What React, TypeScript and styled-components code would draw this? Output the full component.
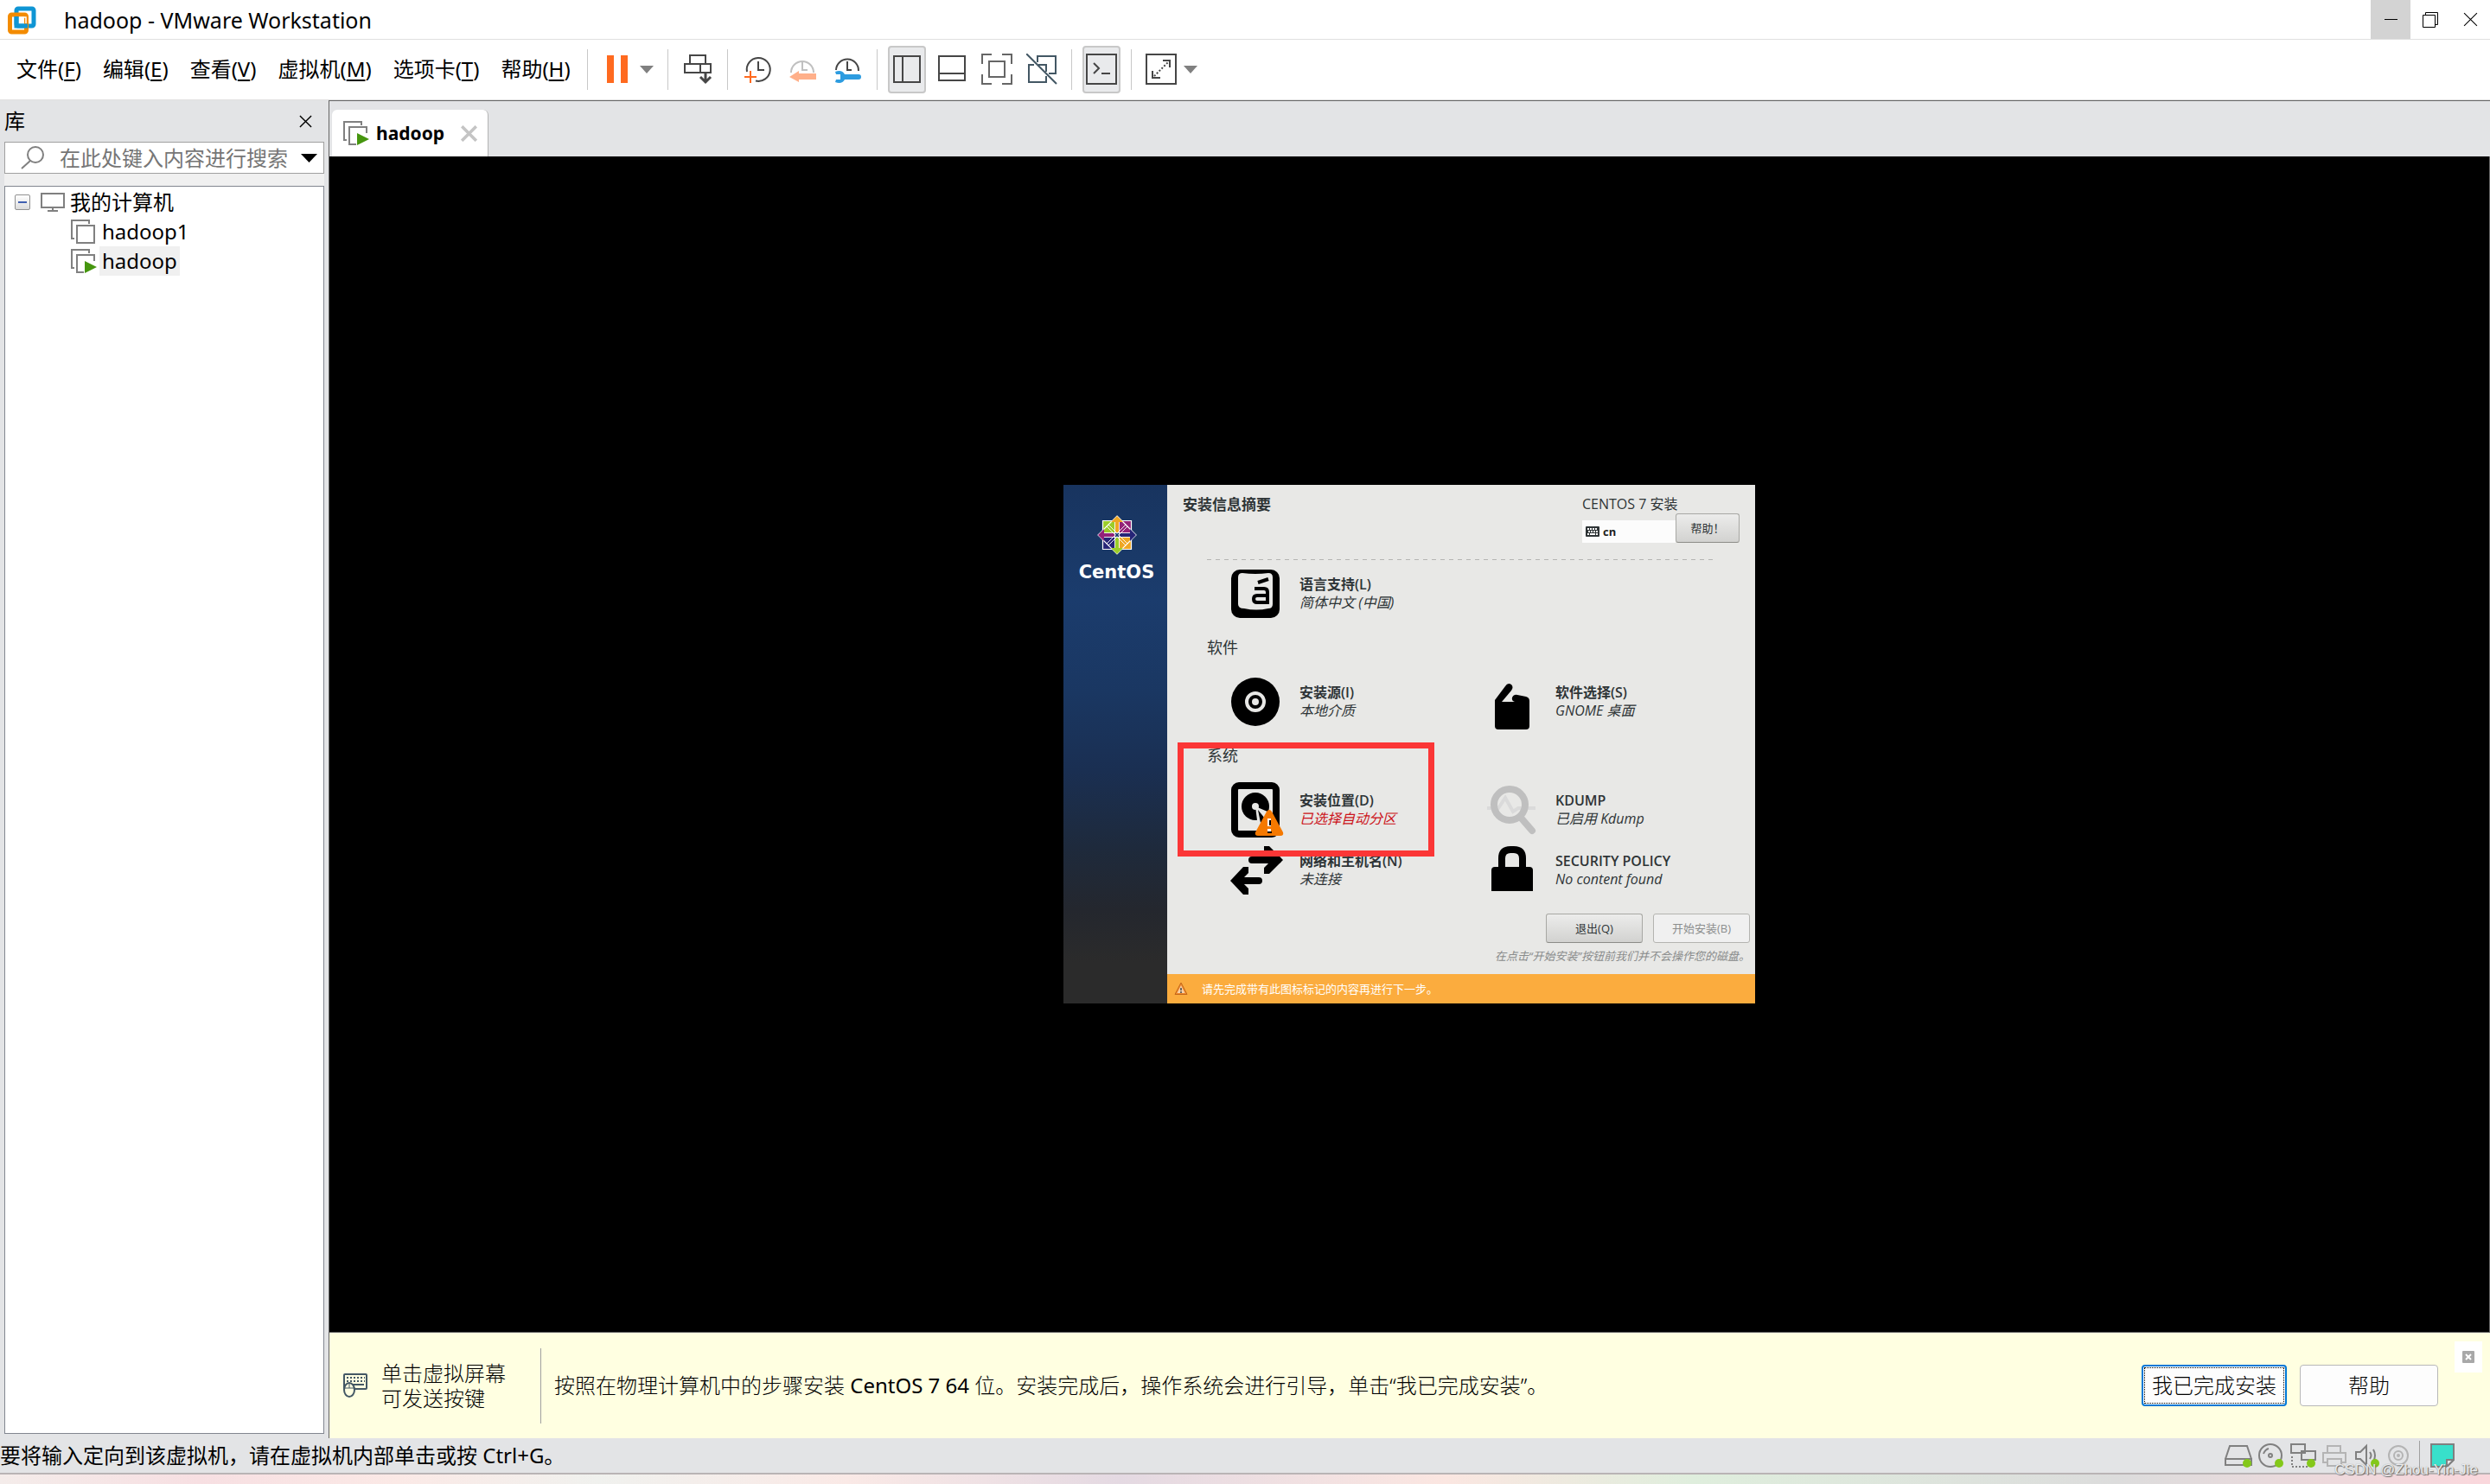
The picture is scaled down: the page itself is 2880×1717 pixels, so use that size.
import React from "react";
import styled, { createGlobalStyle } from "styled-components";

const uiFont = `"Noto Sans", "Noto Sans CJK SC", sans-serif`;
const guestFont = `"Open Sans", "Noto Sans CJK SC", sans-serif`;

const GlobalStyle = createGlobalStyle`
  *, *::before, *::after { box-sizing: border-box; }
  body { margin: 0; background: #e3e4e6; color: #000; font: 24px/32px ${uiFont}; }
  button, input { font: inherit; color: inherit; margin: 0; padding: 0; border: 0; background: none; }
  ul, h1, h2, p { margin: 0; padding: 0; font: inherit; list-style: none; }
  svg { display: block; flex: none; }
`;

const Window = styled.div`
  min-height: 100vh;
  display: flex;
  flex-direction: column;
  position: relative;
`;

/* ---------- title bar ---------- */
const TitleBar = styled.header`
  height: 46px;
  display: flex;
  align-items: center;
  background: #fff;
  border-bottom: 1px solid #e0e0e0;
  padding-left: 8px;
`;
const Title = styled.h1`
  flex: 1;
  padding-left: 32px;
  font-size: 25px;
`;
const CaptionButton = styled.button<{ $hot?: boolean }>`
  width: 46px;
  height: 45px;
  display: flex;
  align-items: center;
  justify-content: center;
  background: ${(p) => (p.$hot ? "#d3d3d3" : "transparent")};
`;

/* ---------- menu and tool bar ---------- */
const CommandBar = styled.div`
  height: 70px;
  display: flex;
  align-items: center;
  background: #fff;
  border-bottom: 1px solid #e0e0e0;
  padding: 0 0 1px 19px;
`;
const Menu = styled.nav`
  display: flex;
  gap: 25px;
  margin-right: 7px;
`;
const MenuItem = styled.button`
  white-space: nowrap;
  u { text-underline-offset: 3px; }
`;
const Separator = styled.span`
  width: 1px;
  height: 47px;
  background: #c8c8c8;
  margin: 0 12px;
`;
const ToolGroup = styled.div`
  display: flex;
  gap: 8px;
`;
const Tool = styled.button<{ $on?: boolean }>`
  width: 44px;
  height: 55px;
  display: flex;
  align-items: center;
  justify-content: center;
  border-radius: 4px;
  border: 2px solid ${(p) => (p.$on ? "#c8c8c8" : "transparent")};
  background: ${(p) => (p.$on ? "#e9eaec" : "transparent")};
`;
const DropArrow = styled.button`
  width: 24px;
  height: 55px;
  display: flex;
  align-items: center;
  justify-content: center;
`;

/* ---------- body ---------- */
const Body = styled.div`
  flex: 1;
  display: flex;
`;
const Library = styled.aside`
  width: 380px;
  flex: none;
  display: flex;
  flex-direction: column;
  padding: 0 5px 5px;
`;
const LibraryHead = styled.div`
  height: 48px;
  display: flex;
  align-items: center;
  justify-content: space-between;
  padding-right: 14px;
`;
const SearchBox = styled.div`
  height: 37px;
  display: flex;
  align-items: center;
  background: #fff;
  border: 1px solid #a0a0a0;
  padding: 0 7px 0 18px;
`;
const SearchInput = styled.input`
  flex: 1;
  min-width: 0;
  padding-left: 18px;
  outline: 0;
  &::placeholder { color: #767676; opacity: 1; }
`;
const Gutter = styled.div`
  height: 14px;
  background: #f0f0f0;
`;
const Tree = styled.ul`
  flex: 1;
  background: #fff;
  border: 1px solid #828790;
  padding-top: 1px !important;
`;
const TreeRow = styled.li<{ $depth: number }>`
  height: 34px;
  display: flex;
  align-items: center;
  padding-left: ${(p) => (p.$depth ? 76 : 11)}px;
`;
const Expander = styled.button`
  width: 18px;
  height: 18px;
  display: flex;
  align-items: center;
  justify-content: center;
  margin-right: 12px;
  border: 1px solid #919191;
  border-radius: 2px;
  background: linear-gradient(#fff, #dcdcdc);
`;
const NodeLabel = styled.span<{ $selected?: boolean }>`
  padding: 0 3px;
  margin-left: 3px;
  line-height: 34px;
  background: ${(p) => (p.$selected ? "#f0f0f0" : "transparent")};
`;

const Workspace = styled.main`
  flex: 1;
  min-width: 0;
  display: flex;
  flex-direction: column;
  border: solid #666;
  border-width: 1px 0 0 1px;
`;
const TabStrip = styled.div`
  height: 64px;
  display: flex;
  align-items: flex-end;
  padding-left: 3px;
`;
const Tab = styled.div`
  height: 54px;
  display: flex;
  align-items: center;
  background: #fff;
  border-right: 1px solid #b4b4b4;
  border-radius: 6px 6px 0 0;
  padding: 0 12px 0 13px;
  font-weight: 700;
  font-size: 21px;
`;
const TabName = styled.span`
  margin: 0 19px 0 8px;
`;
const TabClose = styled.button`
  display: flex;
`;
const Console = styled.div`
  flex: 1;
  display: flex;
  align-items: center;
  justify-content: center;
  background: #000;
  border: solid #666;
  border-width: 0 1px 1px 0;
`;

/* ---------- guest screen ---------- */
const Guest = styled.section`
  width: 800px;
  height: 600px;
  display: flex;
  position: relative;
  font: 16px/21px ${guestFont};
  color: #2e3436;
`;
const Brand = styled.div`
  width: 120px;
  display: flex;
  flex-direction: column;
  align-items: center;
  gap: 8px;
  padding: 35px 0 0 3px;
  background: linear-gradient(#18345f, #1b3c6d 22%, #1a3762 40%, #1a2f52 55%, #1e2a3c 70%, #24272e 82%, #2b2b2b 92%);
`;
const BrandName = styled.span`
  color: #fff;
  font: 700 21px/24px "DejaVu Sans", sans-serif;
`;
const Hub = styled.div`
  flex: 1;
  display: flex;
  flex-direction: column;
  background: #e8e8e6;
`;
const HubHead = styled.div`
  height: 85px;
  display: flex;
  justify-content: space-between;
  padding: 12px 18px 0;
`;
const HubTitle = styled.h2`
  font-weight: 700;
  font-size: 17px;
`;
const HubTools = styled.div`
  width: 182px;
`;
const HubToolRow = styled.div`
  display: flex;
  align-items: flex-end;
`;
const Layout = styled.div`
  flex: 1;
  height: 26px;
  display: flex;
  align-items: center;
  gap: 4px;
  padding-left: 4px;
  background: #fcfcfc;
  color: #1c1f20;
  font-weight: 700;
  font-size: 13px;
`;
const GuestButton = styled.button<{ $wide?: boolean }>`
  width: ${(p) => (p.$wide ? 112 : 74)}px;
  height: 34px;
  border: 1px solid #a8a8a4;
  border-bottom-color: #8c8c88;
  border-radius: 3px;
  background: linear-gradient(#ececeb, #d2d2d0);
  font-size: 13px;
  line-height: 20px;
  &:disabled {
    background: #f0f0f0;
    border-color: #b4b4b0;
    color: #8c8e8e;
  }
`;
const Dashes = styled.div`
  height: 1px;
  margin: 1px 49px 4px 46px;
  background: repeating-linear-gradient(90deg, #b4b4b2 0 5px, transparent 5px 10px);
`;
const Category = styled.h2`
  height: 55px;
  display: flex;
  align-items: center;
  padding-left: 46px !important;
  font-size: 18px !important;
`;
const SpokeGrid = styled.div`
  display: grid;
  grid-template-columns: 296px 1fr;
  padding-left: 74px;
`;
const Spoke = styled.button`
  height: 70px;
  display: flex;
  align-items: center;
  gap: 23px;
  text-align: left;
  white-space: nowrap;
`;
const SpokeIcon = styled.span`
  width: 56px;
  svg { overflow: visible; }
`;
const SpokeName = styled.strong`
  display: block;
  font-size: 16px;
  font-weight: 600;
`;
const SpokeStatus = styled.em<{ $alert?: boolean }>`
  display: block;
  font-size: 16px;
  color: ${(p) => (p.$alert ? "#cc1420" : "inherit")};
`;
const HubFoot = styled.div`
  flex: 1;
  display: flex;
  flex-direction: column;
  align-items: flex-end;
  padding: 15px 6px 0;
`;
const FootButtons = styled.div`
  display: flex;
  gap: 12px;
`;
const FootNote = styled.em`
  padding-top: 5px;
  font-size: 13px;
  color: #8a8c8c;
`;
const Warning = styled.p`
  height: 34px;
  display: flex;
  align-items: center;
  gap: 16px;
  padding-left: 8px !important;
  background: #fbac3e;
  color: #fff;
  font-size: 13px !important;
`;
const Highlight = styled.div`
  position: absolute;
  left: 132px;
  top: 298px;
  width: 297px;
  height: 132px;
  border: 7px solid #fb3636;
  pointer-events: none;
`;

/* ---------- hint panel ---------- */
const Hint = styled.section`
  height: 122px;
  display: flex;
  align-items: center;
  background: #ffffe1;
  padding: 0 9px 0 16px;
  font-weight: 300;
`;
const HintKeys = styled.p`
  width: 184px;
  margin-left: 16px !important;
  line-height: 29px !important;
`;
const HintRule = styled.span`
  width: 1px;
  height: 87px;
  background: #a0a0a0;
`;
const HintText = styled.p`
  flex: 1;
  padding-left: 15px !important;
  span { font-weight: 400; }
`;
const HintButton = styled.button<{ $primary?: boolean }>`
  width: ${(p) => (p.$primary ? 168 : 160)}px;
  height: 48px;
  margin-right: ${(p) => (p.$primary ? 15 : 19)}px;
  border: ${(p) => (p.$primary ? "2px solid #0078d7" : "1px solid #b8b8b8")};
  border-radius: 4px;
  background: #fdfdfd;
  outline: ${(p) => (p.$primary ? "1px dotted #000" : "none")};
  outline-offset: -4px;
  white-space: nowrap;
`;
const HintClose = styled.button`
  width: 32px;
  height: 36px;
  align-self: flex-start;
  margin-top: 10px;
  display: flex;
  align-items: center;
  justify-content: center;
  background: #fff;
`;

/* ---------- status bar ---------- */
const StatusBar = styled.footer`
  height: 42px;
  display: flex;
  align-items: center;
  justify-content: space-between;
  border-bottom: 2px solid #b9b4b5;
  padding-right: 41px;
`;
const Devices = styled.div`
  display: flex;
  align-items: center;
  gap: 5px;
`;
const DeviceRule = styled.span`
  width: 1px;
  height: 34px;
  margin: 0 7px 0 3px;
  background: #a0a0a0;
`;
const Desktop = styled.div`
  height: 11px;
  background: linear-gradient(90deg, #f4ecea, #f7dfe2 8%, #fbe9e6 16%, #f0f1ee 24%, #fae9e6 34%, #e4d9e2 45%, #fbe6e1 58%, #dfeedd 68%, #dcdcdc 85%, #fad7dc);
`;
const Watermark = styled.span`
  position: absolute;
  right: 14px;
  bottom: 4px;
  font: 17px/24px "Liberation Sans", sans-serif;
  color: rgba(255, 255, 255, 0.85);
  text-shadow: 1px 1px 1px #666, 0 0 1px #888;
`;

/* ---------- drawings ---------- */
const AppLogo = () => (
  <svg width="34" height="34" viewBox="0 0 34 34" fill="none">
    <rect x="11" y="4" width="20" height="20" rx="2" stroke="#0f95d4" strokeWidth="5" />
    <rect x="3.500" y="11" width="19" height="20" rx="2" stroke="#f38b00" strokeWidth="5" />
    <path d="M11 13v11h13" stroke="#0f95d4" strokeWidth="5" />
    <path d="M14 14h8v7" stroke="#fff" strokeWidth="1.500" />
  </svg>
);

const Arrow = ({ color = "#808080", w = 16, h = 9 }: { color?: string; w?: number; h?: number }) => (
  <svg width={w} height={h} viewBox="0 0 16 9" preserveAspectRatio="none"><path d="M0 0h16L8 9z" fill={color} /></svg>
);

const VmIcon = ({ running }: { running?: boolean }) => (
  <svg width="30" height="28" viewBox="0 0 30 28" fill="none" stroke="#808080" strokeWidth="2">
    <path d="M4 22H1V1h20v4" />
    <path d={running ? "M15 27H7V7h20v7" : "M7 7h20v20H7z"} />
    {running && <path d="M16 14l14 7-14 7z" fill="#46960f" stroke="none" />}
  </svg>
);

const Cross = ({ size, color, width }: { size: number; color: string; width: number }) => (
  <svg width={size} height={size} viewBox="0 0 16 16" stroke={color} strokeWidth={width}><path d="M1 1l14 14M15 1L1 15" /></svg>
);

const Glyph = ({ children, color = "#464646", size = 36 }: { children: React.ReactNode; color?: string; size?: number }) => (
  <svg width={size} height={size} viewBox={`0 0 ${size} ${size}`} fill="none" stroke={color} strokeWidth="2">{children}</svg>
);

const CtrlAltDel = () => (
  <Glyph><path d="M9 12V2h18v10M3 12h30v10H3zM21 12v10" /><path d="M27 23v10M21 27l6 6 6-6" strokeWidth="3" /></Glyph>
);
const ClockAdd = () => (
  <Glyph>
    <path d="M6 21A13.500 13.500 0 1 1 16 31.500" /><path d="M19 9v10h7" />
    <path d="M10 20v14M3 27h14" stroke="#ff6a1f" />
  </Glyph>
);
const ClockBack = () => (
  <Glyph color="#c0c0c0">
    <path d="M5 22A13 13 0 1 1 31 22" /><path d="M18 9v10h6" />
    <path d="M3 27l11-7v3h20v7H14v3z" fill="#ffb08a" stroke="none" />
  </Glyph>
);
const ClockManage = () => (
  <Glyph>
    <path d="M5 19A13 13 0 1 1 31 20" /><path d="M18 9v10h5" />
    <path d="M4 21c5-2 9-1 11 3h16a3 3 0 0 1 0 6H15c-2 4-6 5-11 3l1-3h5V24H5z" fill="#2d9ce0" stroke="none" />
  </Glyph>
);
const SidePane = () => <Glyph><path d="M3 3h30v30H3zM13 3v30" /></Glyph>;
const BottomPane = () => <Glyph><path d="M3 3h30v28H3zM3 23h30" /></Glyph>;
const FitScreen = () => (
  <Glyph color="#666"><path d="M1 12V1h11M24 1h11v11M35 24v11H24M12 35H1V24M9 9h18v18H9z" /></Glyph>
);
const NoUnity = () => (
  <Glyph color="#435764"><path d="M13 10V3h21v20h-8M9 13H3v20h20v-7M14 13h9v8M0 0l35 35" /></Glyph>
);
const Terminal = () => <Glyph><path d="M1 1h34v34H1zM9 11l6 6-6 6M18 23h10" /></Glyph>;
const Stretch = () => (
  <Glyph><path d="M1 1h34v34H1zM20 8h8v8M8 20v8h9" /><path d="M10 26L26 10" strokeDasharray="2 2" /></Glyph>
);

const CentosLogo = () => (
  <svg width="46" height="46" viewBox="0 0 46 46" stroke="#fff" strokeWidth="1.200">
    <path d="M6.500 6.500H22v16H6.500z" fill="#9ccd2a" />
    <path d="M24 6.500h15.500v16H24z" fill="#932279" />
    <path d="M24 24h15.500v15.500H24z" fill="#efa724" />
    <path d="M6.500 24H22v15.500H6.500z" fill="#262577" />
    <path d="M23 1l22 22-22 22L1 23z" fill="none" />
    <path d="M1 23l7-7v5h12v4H8v5z" fill="#932279" stroke="none" />
    <path d="M45 23l-7-7v5H26v4h12v5z" fill="#262577" stroke="none" />
    <path d="M23 1l-7 7h5v12h4V8h5z" fill="#efa724" stroke="none" />
    <path d="M23 45l-7-7h5V26h4v12h5z" fill="#9ccd2a" stroke="none" />
    <path d="M20.500 8v30M25.500 8v30M8 20.500h30M8 25.500h30M11 13l9 9M13 11l9 9M35 13l-9 9M33 11l-9 9M11 33l9-9M13 35l9-9M35 33l-9-9M33 35l-9-9" fill="none" strokeWidth=".9" />
    <path d="M21 21l4 4M25 21l-4 4" stroke="#1b3c6d" strokeWidth="1.600" />
  </svg>
);

const LanguageIcon = () => (
  <svg width="56" height="56" viewBox="0 0 56 56">
    <rect width="56" height="56" rx="10" />
    <path d="M13 4q15 2 30 0 5 0 5 5v31q0 5-5 5-14 3-28 0-7 0-7-5V9q0-5 5-5z" fill="#e8e8e6" />
    <path d="M31 15l12-4M27 22h11q4 0 4 4v12H30q-4 0-4-4t4-4h12" fill="none" stroke="#000" strokeWidth="4" />
  </svg>
);
const DiscIcon = () => (
  <svg width="56" height="56" viewBox="0 0 56 56">
    <circle cx="28" cy="28" r="28" /><circle cx="28" cy="28" r="10" fill="none" stroke="#e8e8e6" strokeWidth="4" /><circle cx="28" cy="28" r="4" fill="#e8e8e6" />
  </svg>
);
const PackageIcon = () => (
  <svg width="56" height="56" viewBox="0 -4 56 56">
    <path d="M9 22L21 6q3-5 7-2 3 3 0 7L17 24h15q-4-1-3-5 2-4 6-3l10 2q4 1 4 5v29q0 4-4 4H13q-4 0-4-4z" />
  </svg>
);
const DriveIcon = () => (
  <svg width="60" height="64" viewBox="0 0 60 64">
    <rect x="4" y="4" width="48" height="56" rx="5" fill="none" stroke="#000" strokeWidth="8" />
    <circle cx="28" cy="28" r="16" /><circle cx="28" cy="28" r="4" fill="#e8e8e6" />
    <path d="M28 28l14 6v10H30z" fill="#e8e8e6" /><path d="M31 32l8 10-5 5z" />
    <path d="M41 34q3-4 6 0l13 24q1 4-3 4H31q-4 0-3-4z" fill="#f57900" />
    <path d="M44 42v9M44 54v4" stroke="#fff" strokeWidth="4" />
    <path d="M45 44v6M42 58h5" stroke="#000" strokeWidth="2" />
  </svg>
);
const NetworkIcon = () => (
  <svg width="60" height="56" viewBox="0 0 60 56" fill="none" stroke="#000" strokeWidth="8">
    <path d="M24 16h30M32 40H6" strokeLinecap="round" />
    <path d="M38 0h6l16 16-16 16h-6v-7l9-9-9-9zM20 24h-6L-1 40l15 16h6v-7l-9-9 9-9z" fill="#000" stroke="none" />
  </svg>
);
const KdumpIcon = () => (
  <svg width="56" height="56" viewBox="0 0 56 56" fill="none">
    <path d="M0 26h13l8-12 9 16 6-4h20" stroke="#dadada" strokeWidth="4" />
    <circle cx="26" cy="22" r="18" stroke="#bfbfbf" strokeWidth="8" />
    <path d="M39 37l13 15" stroke="#bfbfbf" strokeWidth="8" strokeLinecap="round" />
  </svg>
);
const LockIcon = () => (
  <svg width="56" height="56" viewBox="0 0 56 56">
    <path d="M17 26V14q0-10 10-10h4q10 0 10 10v12" fill="none" stroke="#000" strokeWidth="8" />
    <path d="M5 28q0-4 4-4h40q4 0 4 4v24H5z" />
  </svg>
);
const KeyboardGlyph = () => (
  <svg width="16" height="12" viewBox="0 0 16 12">
    <rect width="16" height="12" rx="1" fill="#2e3436" />
    <path d="M2 3h12M3 6h11" stroke="#fff" strokeWidth="2" strokeDasharray="2 1" /><path d="M2 9h2M5 9h6M12 9h2" stroke="#fff" strokeWidth="2" />
  </svg>
);
const SmallWarning = () => (
  <svg width="16" height="16" viewBox="0 0 16 16">
    <path d="M8 1l7 13.500H1z" fill="#f08a2c" stroke="#c4661a" strokeLinejoin="round" />
    <path d="M8 4l4.500 9h-9z" fill="#f6d0a8" /><path d="M8 7v3M8 11v2" stroke="#444" strokeWidth="1.500" />
  </svg>
);
const KeysIcon = () => (
  <svg width="28" height="28" viewBox="0 0 28 28" fill="none" stroke="#435764" strokeWidth="2">
    <rect x="1" y="1" width="26" height="17" rx="1" />
    <path d="M4 5h21M4 9h21" strokeDasharray="2 2" /><path d="M10 13h14" />
    <ellipse cx="7" cy="19" rx="6" ry="8" fill="#ffffe1" /><path d="M1 17h12M7 11v6" strokeWidth="1" />
  </svg>
);

const Device = ({ children, faded, live }: { children: React.ReactNode; faded?: boolean; live?: boolean }) => (
  <svg width="32" height="30" viewBox="0 0 32 30" fill="none" stroke={faded ? "#b4b4b4" : "#808080"} strokeWidth="2">
    {children}
    {live && <circle cx="26" cy="24" r="5" fill="#84c81a" stroke="none" />}
  </svg>
);

const menus = [["文件", "F"], ["编辑", "E"], ["查看", "V"], ["虚拟机", "M"], ["选项卡", "T"], ["帮助", "H"]];

type SpokeItem = { name: string; status: string; icon: React.ReactNode; alert?: boolean };
const SpokeButton = ({ name, status, icon, alert }: SpokeItem) => (
  <Spoke>
    <SpokeIcon>{icon}</SpokeIcon>
    <span>
      <SpokeName>{name}</SpokeName>
      <SpokeStatus $alert={alert}>{status}</SpokeStatus>
    </span>
  </Spoke>
);

export default function App() {
  return (
    <Window lang="zh-CN">
      <GlobalStyle />
      <TitleBar>
        <AppLogo />
        <Title>hadoop - VMware Workstation</Title>
        <CaptionButton $hot aria-label="最小化">
          <svg width="15" height="15"><path d="M0 7.500h15" stroke="#000" /></svg>
        </CaptionButton>
        <CaptionButton aria-label="还原">
          <svg width="18" height="18" fill="none" stroke="#000"><path d="M.5 3.500h14v14H.5zM3.500 3V.5h14v14H15" /></svg>
        </CaptionButton>
        <CaptionButton aria-label="关闭"><Cross size={17} color="#000" width={1} /></CaptionButton>
      </TitleBar>

      <CommandBar>
        <Menu>
          {menus.map(([label, key]) => (
            <MenuItem key={key}>{label}(<u>{key}</u>)</MenuItem>
          ))}
        </Menu>
        <Separator />
        <Tool aria-label="挂起"><svg width="24" height="32"><path d="M0 0h8v32H0zM16 0h8v32h-8z" fill="#ff6a1f" /></svg></Tool>
        <DropArrow aria-label="电源选项"><Arrow /></DropArrow>
        <Separator />
        <Tool aria-label="发送 Ctrl+Alt+Del"><CtrlAltDel /></Tool>
        <Separator />
        <ToolGroup>
          <Tool aria-label="拍摄快照"><ClockAdd /></Tool>
          <Tool aria-label="恢复快照"><ClockBack /></Tool>
          <Tool aria-label="管理快照"><ClockManage /></Tool>
        </ToolGroup>
        <Separator />
        <ToolGroup>
          <Tool $on aria-label="显示库"><SidePane /></Tool>
          <Tool aria-label="显示缩略图栏"><BottomPane /></Tool>
          <Tool aria-label="全屏"><FitScreen /></Tool>
          <Tool aria-label="Unity"><NoUnity /></Tool>
        </ToolGroup>
        <Separator />
        <Tool $on aria-label="控制台视图"><Terminal /></Tool>
        <Separator />
        <Tool aria-label="拉伸"><Stretch /></Tool>
        <DropArrow aria-label="拉伸选项"><Arrow /></DropArrow>
      </CommandBar>

      <Body>
        <Library>
          <LibraryHead>
            <span>库</span>
            <button aria-label="关闭库"><Cross size={15} color="#000" width={1.5} /></button>
          </LibraryHead>
          <SearchBox>
            <svg width="27" height="27" viewBox="0 0 27 27" fill="none" stroke="#808080" strokeWidth="2"><circle cx="17" cy="10" r="9" /><path d="M11 17l-10 9" /></svg>
            <SearchInput aria-label="搜索" placeholder="在此处键入内容进行搜索" />
            <button aria-label="搜索选项"><Arrow color="#000" w={19} h={10} /></button>
          </SearchBox>
          <Gutter />
          <Tree>
            <TreeRow $depth={0}>
              <Expander aria-label="折叠"><svg width="10" height="2"><path d="M0 1h10" stroke="#4060b0" strokeWidth="2" /></svg></Expander>
              <svg width="28" height="22" fill="none" stroke="#808080" strokeWidth="2"><path d="M1 1h26v16H1zM14 17v4M8 21h12" /></svg>
              <NodeLabel>我的计算机</NodeLabel>
            </TreeRow>
            <TreeRow $depth={1}><VmIcon /><NodeLabel>hadoop1</NodeLabel></TreeRow>
            <TreeRow $depth={1}><VmIcon running /><NodeLabel $selected>hadoop</NodeLabel></TreeRow>
          </Tree>
        </Library>

        <Workspace>
          <TabStrip>
            <Tab>
              <VmIcon running />
              <TabName>hadoop</TabName>
              <TabClose aria-label="关闭选项卡"><Cross size={19} color="#c4c4c4" width={3} /></TabClose>
            </Tab>
          </TabStrip>

          <Console>
            <Guest>
              <Brand>
                <CentosLogo />
                <BrandName>CentOS</BrandName>
              </Brand>
              <Hub>
                <HubHead>
                  <HubTitle>安装信息摘要</HubTitle>
                  <HubTools>
                    <span>CENTOS 7 安装</span>
                    <HubToolRow>
                      <Layout><KeyboardGlyph />cn</Layout>
                      <GuestButton>帮助！</GuestButton>
                    </HubToolRow>
                  </HubTools>
                </HubHead>
                <Dashes />
                <SpokeGrid>
                  <SpokeButton name="语言支持(L)" status="简体中文 (中国)" icon={<LanguageIcon />} />
                </SpokeGrid>
                <Category>软件</Category>
                <SpokeGrid>
                  <SpokeButton name="安装源(I)" status="本地介质" icon={<DiscIcon />} />
                  <SpokeButton name="软件选择(S)" status="GNOME 桌面" icon={<PackageIcon />} />
                </SpokeGrid>
                <Category>系统</Category>
                <SpokeGrid>
                  <SpokeButton name="安装位置(D)" status="已选择自动分区" icon={<DriveIcon />} alert />
                  <SpokeButton name="KDUMP" status="已启用 Kdump" icon={<KdumpIcon />} />
                  <SpokeButton name="网络和主机名(N)" status="未连接" icon={<NetworkIcon />} />
                  <SpokeButton name="SECURITY POLICY" status="No content found" icon={<LockIcon />} />
                </SpokeGrid>
                <HubFoot>
                  <FootButtons>
                    <GuestButton $wide>退出(Q)</GuestButton>
                    <GuestButton $wide disabled>开始安装(B)</GuestButton>
                  </FootButtons>
                  <FootNote>在点击“开始安装”按钮前我们并不会操作您的磁盘。</FootNote>
                </HubFoot>
                <Warning><SmallWarning />请先完成带有此图标标记的内容再进行下一步。</Warning>
              </Hub>
              <Highlight />
            </Guest>
          </Console>

          <Hint>
            <KeysIcon />
            <HintKeys>单击虚拟屏幕<br />可发送按键</HintKeys>
            <HintRule />
            <HintText>按照在物理计算机中的步骤安装 <span>CentOS 7 64</span> 位。安装完成后，操作系统会进行引导，单击“我已完成安装”。</HintText>
            <HintButton $primary>我已完成安装</HintButton>
            <HintButton>帮助</HintButton>
            <HintClose aria-label="关闭提示">
              <svg width="14" height="14"><rect width="14" height="14" rx="1" fill="#a8a8a8" /><path d="M4 4l6 6M10 4l-6 6" stroke="#fff" strokeWidth="2" /></svg>
            </HintClose>
          </Hint>
        </Workspace>
      </Body>

      <StatusBar>
        <span>要将输入定向到该虚拟机，请在虚拟机内部单击或按 Ctrl+G。</span>
        <Devices>
          <Device live><path d="M1 19L6 4h20l5 15M1 19v7h30v-7zM1 19h21" /></Device>
          <Device live><circle cx="16" cy="15" r="13" /><circle cx="16" cy="15" r="2" /><path d="M8 13q2-5 6-6" /></Device>
          <Device live><path d="M3 2h16v10H3zM15 10h16v10H15z" fill="#e3e4e6" /><path d="M4 16v12h18" strokeDasharray="2 2" /></Device>
          <Device faded><path d="M8 12V4h15v8M8 23H3V12h26v11h-5M8 19h16v8H8z" /></Device>
          <Device live><path d="M4 11h5l7-7v22l-7-7H4zM20 11q3 4 0 8M24 8q4 7 0 14" /></Device>
          <Device faded><circle cx="16" cy="15" r="11" /><circle cx="16" cy="15" r="5" /><circle cx="16" cy="15" r="1" /></Device>
          <DeviceRule />
          <svg width="28" height="28" stroke="#808080" strokeWidth="2"><path d="M1 1h26v18l-8 8H1z" fill="#38e0cb" /><path d="M27 19h-8v8z" fill="#e3e4e6" /></svg>
        </Devices>
      </StatusBar>
      <Desktop />
      <Watermark>CSDN @Zhou-Yin-Jie</Watermark>
    </Window>
  );
}
